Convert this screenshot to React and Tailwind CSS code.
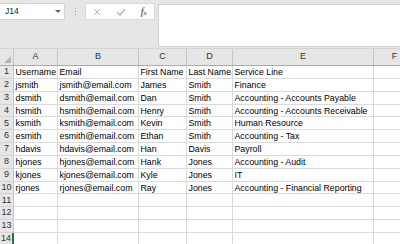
import React from "react";

const cols = [
  { k: "A", w: "w-[44px]" },
  { k: "B", w: "w-[81px]" },
  { k: "C", w: "w-[48px]" },
  { k: "D", w: "w-[46px]" },
  { k: "E", w: "w-[141px]" },
  { k: "F", w: "w-[42px]" },
];

const data = [
  ["Username", "Email", "First Name", "Last Name", "Service Line"],
  ["jsmith", "jsmith@email.com", "James", "Smith", "Finance"],
  ["dsmith", "dsmith@email.com", "Dan", "Smith", "Accounting - Accounts Payable"],
  ["hsmith", "hsmith@email.com", "Henry", "Smith", "Accounting - Accounts Receivable"],
  ["ksmith", "ksmith@email.com", "Kevin", "Smith", "Human Resource"],
  ["esmith", "esmith@email.com", "Ethan", "Smith", "Accounting - Tax"],
  ["hdavis", "hdavis@email.com", "Han", "Davis", "Payroll"],
  ["hjones", "hjones@email.com", "Hank", "Jones", "Accounting - Audit"],
  ["kjones", "kjones@email.com", "Kyle", "Jones", "IT"],
  ["rjones", "rjones@email.com", "Ray", "Jones", "Accounting - Financial Reporting"],
  [], [], [], [],
];

export default function App() {
  return (
    <div className="w-[400px] h-[244px] overflow-hidden bg-[#e6e6e6] font-['Liberation_Sans',sans-serif] text-[8.8px] text-black">
      {/* formula bar */}
      <div className="flex h-[48px] pt-[3px]">
        <div className="flex items-center justify-between w-[65px] h-[17px] bg-white border border-[#d4d4d4] border-l-0 pl-[5px] pr-[3px]">
          <span className="text-[8.5px] text-[#222]">J14</span>
          <svg width="6" height="4" viewBox="0 0 6 4"><path d="M0 0h6L3 3z" fill="#666" /></svg>
        </div>
        <div className="w-[20px] flex flex-col items-center justify-center gap-[2px] h-[17px]">
          <div className="w-[1px] h-[1px] bg-[#999]" />
          <div className="w-[1px] h-[1px] bg-[#999]" />
          <div className="w-[1px] h-[1px] bg-[#999]" />
        </div>
        <div className="flex items-center justify-around w-[70px] h-[17px] bg-white border border-[#d9d9d9]">
          <svg width="8" height="8" viewBox="0 0 8 8"><path d="M1 1l6 6M7 1l-6 6" stroke="#b0b0b0" strokeWidth="1" /></svg>
          <svg width="10" height="8" viewBox="0 0 10 8"><path d="M1 4l3 3 5-6" stroke="#b0b0b0" strokeWidth="1.2" fill="none" /></svg>
          <span className="font-['Liberation_Serif',serif] italic text-[10px] text-[#333] leading-none">f<span className="text-[7px]">x</span></span>
        </div>
        <div className="ml-[3px] flex-1 h-[43px] mt-[1px] bg-white border border-[#d4d4d4] border-r-0" />
      </div>
      {/* column headers */}
      <div className="flex h-[18px] border-t border-[#d4d4d4] border-b border-b-[#ababab] bg-[#e6e6e6]">
        <div className="w-[14px] shrink-0 relative border-r border-[#c6c6c6]">
          <svg className="absolute right-[2px] bottom-[2px]" width="7" height="7" viewBox="0 0 7 7"><path d="M7 0v7H0z" fill="#b4b4b4" /></svg>
        </div>
        {cols.map((c) => (
          <div key={c.k} className={`${c.w} shrink-0 flex items-center justify-center border-r border-[#c6c6c6] text-[9px] text-[#333]`}>
            {c.k}
          </div>
        ))}
      </div>
      {/* rows */}
      {data.map((row, i) => (
        <div key={i} className="flex h-[12.85px] bg-white">
          <div className={`w-[14px] shrink-0 flex items-center justify-center bg-[#e6e6e6] border-b border-[#d4d4d4] text-[9px] text-[#333] ${i === 13 ? "border-r-2 border-r-[#217346] bg-[#dcdcdc]" : "border-r border-r-[#c6c6c6]"}`}>
            {i + 1}
          </div>
          {cols.map((c, j) => (
            <div key={c.k} className={`${c.w} shrink-0 border-r border-b border-[#dadada] pl-[1.5px] leading-[12px] whitespace-nowrap overflow-visible`}>
              {row[j] || ""}
            </div>
          ))}
        </div>
      ))}
    </div>
  );
}
